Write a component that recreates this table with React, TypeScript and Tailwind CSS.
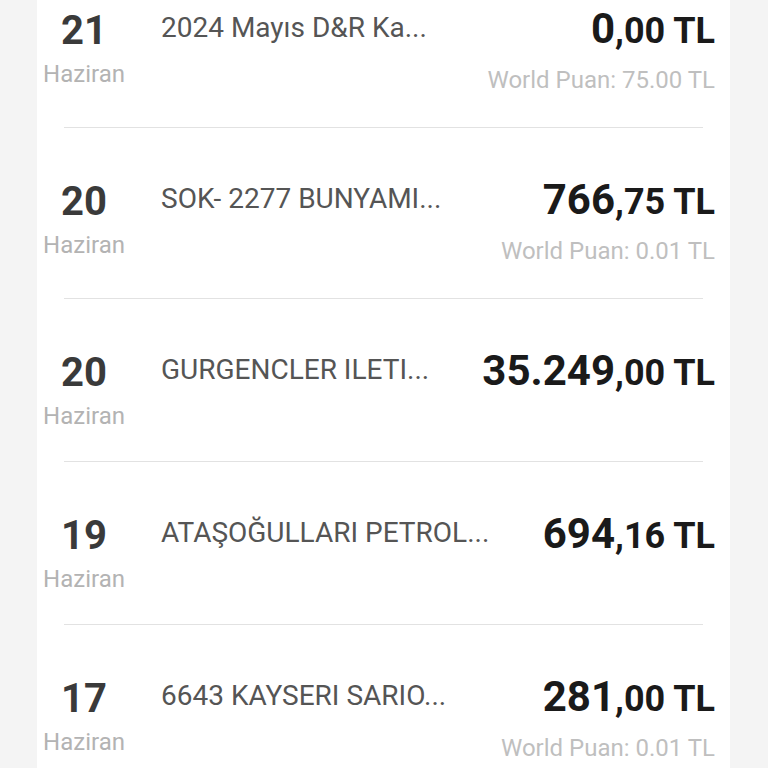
import React from "react";

type Row = {
  day: string;
  name: string;
  int: string;
  dec: string;
  puan?: string;
};

const rows: Row[] = [
  { day: "21", name: "2024 Mayıs D&R Ka...", int: "0", dec: ",00 TL", puan: "World Puan: 75.00 TL" },
  { day: "20", name: "SOK- 2277 BUNYAMI...", int: "766", dec: ",75 TL", puan: "World Puan: 0.01 TL" },
  { day: "20", name: "GURGENCLER ILETI...", int: "35.249", dec: ",00 TL" },
  { day: "19", name: "ATAŞOĞULLARI PETROL...", int: "694", dec: ",16 TL" },
  { day: "17", name: "6643 KAYSERI SARIO...", int: "281", dec: ",00 TL", puan: "World Puan: 0.01 TL" },
];

function Item({ r }: { r: Row }) {
  return (
    <div className="flex items-start pt-[50px] pb-[30px] pr-[15px]">
      <div className="w-[94px] flex flex-col items-center shrink-0">
        <div className="text-[40px] leading-[48px] font-bold text-[#3a3a3a]">{r.day}</div>
        <div className="mt-[4px] text-[24px] leading-[30px] text-[#b3b3b3]">Haziran</div>
      </div>
      <div className="ml-[30px] mt-[6px] text-[28px] leading-[30px] text-[#555555] whitespace-nowrap flex-1 min-w-0">
        {r.name}
      </div>
      <div className="-mt-[2px] mb-[2px] flex flex-col items-end shrink-0">
        <div className="text-[42px] leading-[48px] font-bold text-[#1a1a1a] whitespace-nowrap">
          <span>{r.int}</span>
          <span className="text-[36px] leading-none">{r.dec}</span>
        </div>
        {r.puan && (
          <div className="mt-[12px] text-[24px] leading-[30px] text-[#bfbfbf] whitespace-nowrap">{r.puan}</div>
        )}
      </div>
    </div>
  );
}

export default function App() {
  return (
    <div
      className="w-[768px] h-[768px] overflow-hidden bg-[#f4f4f4]"
      style={{ fontFamily: "Roboto, 'Noto Sans', sans-serif" }}
    >
      <div className="ml-[37px] w-[693px] h-full bg-white overflow-hidden">
        <div className="-mt-[43px]">
          {rows.map((r, i) => (
            <div key={i}>
              {i > 0 && <div className="mx-[27px] h-px bg-[#e2e2e2]" />}
              <Item r={r} />
            </div>
          ))}
        </div>
      </div>
    </div>
  );
}
